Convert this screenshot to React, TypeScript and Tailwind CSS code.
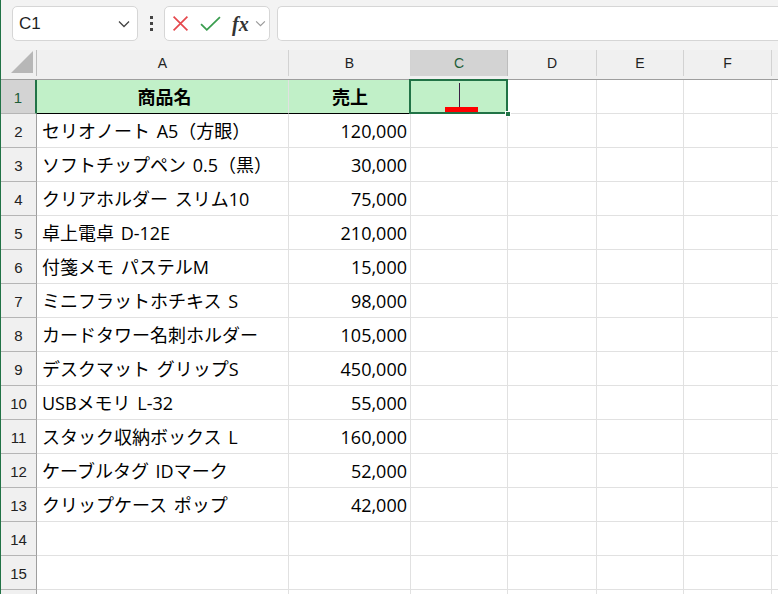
import React from 'react';

const FONT = { fontFamily: '"Open Sans", "Noto Sans CJK JP", "Liberation Sans", sans-serif' };
const UI_FONT = { fontFamily: '"Liberation Sans", sans-serif' };

const COLS = ['A', 'B', 'C', 'D', 'E', 'F', 'G'];
const GRID = 'grid grid-cols-[36px_252px_122px_97px_89px_87px_88px_40px]';

const ROWS: [string, string][] = [
    ['セリオノート A5（方眼）', '120,000'],
    ['ソフトチップペン 0.5（黒）', '30,000'],
    ['クリアホルダー スリム10', '75,000'],
    ['卓上電卓 D-12E', '210,000'],
    ['付箋メモ パステルM', '15,000'],
    ['ミニフラットホチキス S', '98,000'],
    ['カードタワー名刺ホルダー', '105,000'],
    ['デスクマット グリップS', '450,000'],
    ['USBメモリ L-32', '55,000'],
    ['スタック収納ボックス L', '160,000'],
    ['ケーブルタグ IDマーク', '52,000'],
    ['クリップケース ポップ', '42,000'],
    ['', ''],
    ['', ''],
];

function Chevron({ className }: { className?: string }) {
    return (
        <svg viewBox="0 0 12 8" className={className} fill="none" stroke="currentColor" strokeWidth="1.3">
            <path d="M1 1.5 L6 6.5 L11 1.5" />
        </svg>
    );
}

function Toolbar() {
    return (
        <div className="flex h-[50px] items-start bg-[#f3f3f3] pt-[6px]">
            {/* Name box */}
            <div className="ml-[11px] flex h-[35px] w-[126px] items-center justify-between rounded-[5px] border border-[#d6d6d6] bg-white pr-[7px] pl-[6px]">
                <span className="text-[17px] text-[#1f1f1f]" style={UI_FONT}>
                    C1
                </span>
                <Chevron className="h-[8px] w-[12px] text-[#444]" />
            </div>
            {/* Dots */}
            <div className="flex h-[35px] w-[26px] flex-col items-center justify-center gap-[3px]">
                <span className="h-[3px] w-[3px] bg-[#444]" />
                <span className="h-[3px] w-[3px] bg-[#444]" />
                <span className="h-[3px] w-[3px] bg-[#444]" />
            </div>
            {/* Cancel / enter / fx */}
            <div className="flex h-[35px] w-[106px] items-center rounded-[5px] border border-[#d6d6d6] bg-white pl-[7px]">
                <svg viewBox="0 0 16 16" className="h-[17px] w-[17px]" fill="none" stroke="#e5484d" strokeWidth="1.6">
                    <path d="M1.5 1.5 L14.5 14.5 M14.5 1.5 L1.5 14.5" />
                </svg>
                <svg viewBox="0 0 20 14" className="ml-[11px] h-[15px] w-[21px]" fill="none" stroke="#3a9d4f" strokeWidth="1.7">
                    <path d="M1 7.5 L6.5 13 L19 1" />
                </svg>
                <span
                    className="ml-[11px] text-[20px] leading-none font-bold text-[#333] italic"
                    style={{ fontFamily: '"Liberation Serif", serif' }}
                >
                    fx
                </span>
                <Chevron className="ml-[6px] h-[7px] w-[11px] text-[#999]" />
            </div>
            {/* Formula bar */}
            <div className="ml-[7px] h-[35px] flex-1 rounded-l-[5px] border border-r-0 border-[#d6d6d6] bg-white" />
        </div>
    );
}

function HeaderRow() {
    return (
        <div className={`${GRID} h-[30px] border-b border-[#9e9e9e] bg-[#f0f0f0] text-[14px] text-[#222]`} style={UI_FONT}>
            <div className="relative border-r border-[#bdbdbd]">
                <svg viewBox="0 0 22 22" className="absolute right-[3px] bottom-[3px] h-[22px] w-[22px]">
                    <path d="M22 0 L22 22 L0 22 Z" fill="#b7b7b7" />
                </svg>
            </div>
            {COLS.map((c) =>
                c === 'C' ? (
                    <div key={c} className="flex items-center justify-center border-r border-[#bdbdbd] bg-[#d3d3d3] pt-[1px] text-[#1d5e38]">
                        {c}
                    </div>
                ) : (
                    <div key={c} className="flex items-center justify-center border-r border-[#d2d2d2] pt-[1px]">
                        {c === 'G' ? '' : c}
                    </div>
                ),
            )}
            <div />
        </div>
    );
}

function SelectedCell() {
    return (
        <div className="relative border-r border-b border-[#e1e1e1] bg-[#c1f0c8]">
            <div className="pointer-events-none absolute top-[-1px] right-[-1px] bottom-[-1px] left-[-2px] border-2 border-[#217346]" />
            <div className="absolute right-[-4px] bottom-[-4px] h-[6px] w-[6px] border border-white bg-[#217346]" />
            <div className="absolute top-[3px] left-[48px] h-[27px] w-px bg-[#3b1f45]" />
            <div className="absolute bottom-[1px] left-[34px] h-[5px] w-[33px] bg-[#ff0000]" />
        </div>
    );
}

function EmptyCells() {
    return (
        <>
            <div className="border-r border-b border-[#e1e1e1]" />
            <div className="border-r border-b border-[#e1e1e1]" />
            <div className="border-r border-b border-[#e1e1e1]" />
            <div className="border-r border-b border-[#e1e1e1]" />
            <div className="border-b border-[#e1e1e1]" />
        </>
    );
}

export default function App() {
    return (
        <div className="h-[594px] w-[778px] overflow-hidden border-l border-[#217346] bg-white" style={FONT}>
            <Toolbar />
            <HeaderRow />

            {/* Row 1: headers */}
            <div className={`${GRID} h-[34px] text-[18px] text-black`}>
                <div
                    className="flex items-center justify-center border-r-2 border-b border-r-[#217346] border-b-[#b5b5b5] bg-[#d3d3d3] pt-[3px] text-[15px] text-[#1d5e38]"
                    style={UI_FONT}
                >
                    1
                </div>
                <div className="flex items-center justify-center border-r border-b border-r-[#e1e1e1] border-b-black bg-[#c1f0c8] pt-[1px] pl-[4px] font-bold">
                    商品名
                </div>
                <div className="flex items-center justify-center border-b border-b-black bg-[#c1f0c8] pt-[1px] font-bold">
                    売上
                </div>
                <SelectedCell />
                <div className="border-r border-b border-[#e1e1e1]" />
                <div className="border-r border-b border-[#e1e1e1]" />
                <div className="border-r border-b border-[#e1e1e1]" />
                <div className="border-b border-[#e1e1e1]" />
            </div>

            {ROWS.map(([name, sales], i) => (
                <div key={i} className={`${GRID} h-[34px] text-[18px] text-black`}>
                    <div
                        className="flex items-center justify-center border-r border-b border-r-[#9e9e9e] border-b-[#b5b5b5] bg-[#f0f0f0] pt-[4px] text-[15px] text-[#222]"
                        style={UI_FONT}
                    >
                        {i + 2}
                    </div>
                    <div className="flex items-center overflow-hidden border-r border-b border-[#e1e1e1] pt-[1px] pl-[5px] whitespace-nowrap [word-spacing:2px]">
                        {name}
                    </div>
                    <div className="flex items-center justify-end border-r border-b border-[#e1e1e1] pt-[1px] pr-[3px]">
                        {sales}
                    </div>
                    <EmptyCells />
                </div>
            ))}

            {/* Row 16, only its top edge shows */}
            <div className={`${GRID} h-[34px]`}>
                <div className="border-r border-r-[#9e9e9e] bg-[#f0f0f0]" />
                <div className="border-r border-[#e1e1e1]" />
                <div className="border-r border-[#e1e1e1]" />
                <div className="border-r border-[#e1e1e1]" />
                <div className="border-r border-[#e1e1e1]" />
                <div className="border-r border-[#e1e1e1]" />
                <div className="border-r border-[#e1e1e1]" />
                <div />
            </div>
        </div>
    );
}
